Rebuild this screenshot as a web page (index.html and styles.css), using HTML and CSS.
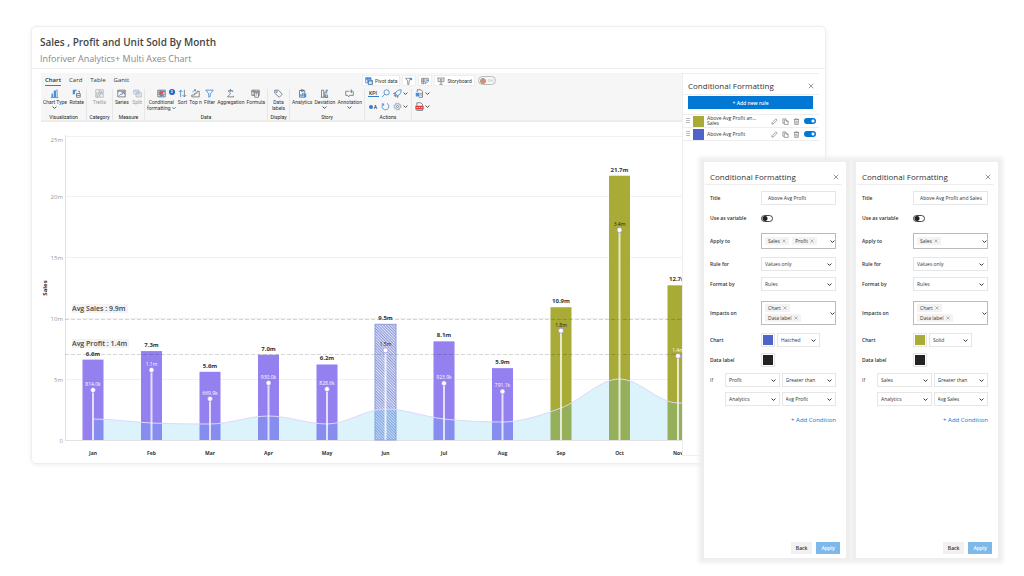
FILE: index.html
```html
<!DOCTYPE html>
<html lang="en">
<head>
    <meta charset="utf-8">
    <title>Sales, Profit and Unit Sold By Month</title>
    <link rel="stylesheet" href="styles.css">
</head>
<body>
<main class="report">
    <header class="report-header">
        <h1>Sales , Profit and Unit Sold By Month</h1>
        <p>Inforiver Analytics+ Multi Axes Chart</p>
    </header>
    <div class="report-body">
        <div class="canvas">
            <div class="ribbon">
                <div class="ribbon-top">
                    <nav class="tabs">
                        <a href="#" class="active">Chart</a>
                        <a href="#">Card</a>
                        <a href="#">Table</a>
                        <a href="#">Gantt</a>
                    </nav>
                    <div class="quick">
                        <button type="button"><svg viewBox="0 0 12 12"><path class="b" d="M1 1h8v3M1 1v8h3M1 3.500h8M3.500 1v8"/><rect class="fb" x="1" y="1" width="8" height="2"/><path d="M5 5h6v6H5z" fill="#fff"/><path class="b" d="M5 5h6v6H5zM5 7h6"/></svg>Pivot data</button>
                        <button type="button" aria-label="Filter"><svg viewBox="0 0 12 12"><path d="M1 2h8L6 6v5H4V6z"/><circle class="fb" cx="9" cy="3" r="2"/></svg></button>
                        <button type="button" aria-label="Edit table"><svg viewBox="0 0 12 12"><path d="M1 2h10v4M1 2v8h4M1 4.500h10M1 7h5M4 2v8"/><path class="b" d="M6 10l1-2.500 3-3 1.500 1.500-3 3z"/></svg></button>
                        <button type="button"><svg viewBox="0 0 12 12"><path d="M0.500 1.500h11M1.500 1.500v5.500h9V1.500M6 7v4M3.500 11h5M4 3.500h4M4 5h4"/></svg>Storyboard</button>
                        <label class="pill"><input type="checkbox"><span>Off</span></label>
                    </div>
                </div>
                <div class="groups">
                    <section class="group g-visual">
                        <div class="tools">
                            <button type="button"><svg viewBox="0 0 12 12"><path class="fb" d="M2 6h2v5H2zM5 2h3v9H5z"/><path class="b" d="M8 1.500h1.500V11M1 11.300h10"/></svg>Chart Type<i class="chev"></i></button>
                            <button type="button"><svg viewBox="0 0 12 12"><path class="fb" d="M1 1h3v6H1zM4 1h2v2H4z"/><path d="M6 6h5v5H6zM6 8.500h5M8 3h2v2"/></svg>Rotate</button>
                        </div>
                        <h2>Visualization</h2>
                    </section>
                    <section class="group g-category">
                        <div class="tools center">
                            <button type="button" disabled><svg viewBox="0 0 12 12"><path d="M1 1h4.500v4.500H1zM6.500 1H11v4.500H6.500zM1 6.500h4.500V11H1zM6.500 6.500H11V11H6.500z"/><path class="fb" d="M7 3h3v2.500H7zM2 8h2v3H2z"/></svg>Trellis</button>
                        </div>
                        <h2>Category</h2>
                    </section>
                    <section class="group g-measure">
                        <div class="tools">
                            <button type="button"><svg viewBox="0 0 12 12"><path d="M1 1.500h10v9H1zM1 3h10"/><path class="b" d="M3 9l2-2 1 1 3-4"/><path d="M6 5h4v2"/></svg>Series</button>
                            <button type="button" disabled><svg viewBox="0 0 12 12"><path class="b" d="M1 1.500h7v5H1zM1 3h7"/><path d="M4 5h7v5.500H4zM6 8h3"/></svg>Split</button>
                        </div>
                        <h2>Measure</h2>
                    </section>
                    <section class="group g-data">
                        <div class="tools">
                            <button type="button"><svg viewBox="0 0 12 12"><path d="M1 1.500h10v9H1zM1 4h10M1 7h10M4 1.500v9"/><path class="fb" d="M4 2h6v2H4zM4 7.500h5v2.500H4z"/><path fill="#e05252" stroke="none" d="M3 4h5v3H3z"/></svg><b class="badge">2</b>Conditional<br>formatting <i class="chev inline"></i></button>
                            <button type="button"><svg viewBox="0 0 12 12"><path class="b" d="M3.500 11V1.500M1 4l2.500-2.500L6 4"/><path d="M8.500 1v9.500M6 8l2.500 2.500L11 8"/></svg>Sort</button>
                            <button type="button"><svg viewBox="0 0 12 12"><path d="M1 10.500h10V3H8v2.500H5V8H1z"/><path class="b" d="M2 4l4-3M4 1h2v2"/></svg>Top n</button>
                            <button type="button"><svg viewBox="0 0 12 12"><path class="b" d="M1 1.500h10L7 6.500V10l-2 1V6.500z"/></svg>Filter</button>
                            <button type="button"><svg viewBox="0 0 12 12"><path d="M9 4V2.500H3L6 6l-4 4.500h8V9"/><path class="b" d="M6 .5v3M4.500 2L6 .5 7.500 2"/></svg>Aggregation</button>
                            <button type="button"><svg viewBox="0 0 12 12"><path d="M1 1.500h10v7H1zM1 3.500h10M4 1.500v7"/><path d="M5 4.500h5v6.500H5z" fill="#fff"/><path class="b" d="M6.500 6h2M6.500 8h2"/></svg>Formula</button>
                        </div>
                        <h2>Data</h2>
                    </section>
                    <section class="group g-display">
                        <div class="tools center">
                            <button type="button"><svg viewBox="0 0 12 12"><path d="M1 1.500h5l5 5.500-4 4-6-5.500z"/><circle class="b" cx="3.500" cy="3.800" r="1"/></svg>Data<br>labels</button>
                        </div>
                        <h2>Display</h2>
                    </section>
                    <section class="group g-story">
                        <div class="tools">
                            <button type="button"><svg viewBox="0 0 12 12"><path d="M2 2h7v9H2zM4 1h3v2H4z"/><path class="fb" d="M3 7h2v3H3zM5.500 5h2v5h-2zM8 6h3v5H8z"/></svg>Analytics</button>
                            <button type="button"><svg viewBox="0 0 12 12"><path d="M1 11h10M2 11V1.500h3V11M6.500 11V4h2.500"/><path class="b" d="M9 1v5M7.500 2.500L9 1l1.500 1.500M7 8h3v3H7z"/></svg>Deviation<i class="chev"></i></button>
                            <button type="button"><svg viewBox="0 0 12 12"><path d="M5 3H1v5.500h2.500L5 10.500l1-2h5V3.500"/><path class="b" d="M8.500.5v5M6 3h5"/></svg>Annotation<i class="chev"></i></button>
                        </div>
                        <h2>Story</h2>
                    </section>
                    <section class="group g-actions">
                        <div class="actions">
                            <button type="button" class="kpi">KPI</button>
                            <button type="button" aria-label="Search"><svg viewBox="0 0 12 12"><circle class="b" cx="7.500" cy="4.500" r="3.500"/><path class="b" d="M5 7l-4 4"/></svg></button>
                            <button type="button" aria-label="Quick actions"><svg viewBox="0 0 12 12"><path class="b" d="M3 6c1-3 4-5 8-5 0 4-2 7-5 8z"/><path class="fb" d="M1 8l3-1 1 2-2 2z"/><path d="M7 9l-1 2.500L5 9M3 7L.5 6 4 4.500"/></svg><i class="chev"></i></button>
                            <button type="button" aria-label="Text size" class="dot-a"><b></b>A</button>
                            <button type="button" aria-label="Refresh"><svg viewBox="0 0 12 12"><path class="b" d="M3 2.500a4.500 4.500 0 1 0 5-.6M1 2.500h2.500V5"/></svg></button>
                            <button type="button" aria-label="Settings"><svg viewBox="0 0 12 12"><circle class="g" cx="6" cy="6" r="4.700" stroke-dasharray="2 1.700"/><circle class="g" cx="6" cy="6" r="3.800"/><circle class="b" cx="6" cy="6" r="1.500"/></svg><i class="chev"></i></button>
                        </div>
                        <h2>Actions</h2>
                    </section>
                    <section class="group g-export">
                        <button type="button" aria-label="Export"><svg viewBox="0 0 12 12"><path d="M3 4V1h5l2 2v8H5"/><path class="fb" d="M1 5h5v5H1z"/><path d="M7 6h2M7 8h2"/></svg><i class="chev"></i></button>
                        <button type="button" aria-label="Export to PDF"><svg viewBox="0 0 12 12"><path d="M2.500 5V1h5L10 3v2M2.500 10v1.500H10V10"/><path fill="#d9373c" stroke="none" d="M.5 5h11v5H.5z"/><path stroke="#fff" d="M2 7.500h2M5 7.500h2M8 7.500h2"/></svg><i class="chev"></i></button>
                    </section>
                </div>
            </div>
            <svg class="chart" id="chart" viewBox="0 0 641 334" role="img" aria-label="Sales and profit by month">
                <defs>
                    <pattern id="hatch" width="2" height="2" patternUnits="userSpaceOnUse" patternTransform="rotate(-45)">
                        <rect width="2" height="2" fill="#e0e4f6" stroke="none"/>
                        <rect width="1" height="2" fill="#8c99da" stroke="none"/>
                    </pattern>
                </defs>
            </svg>
        </div>
        <aside class="rules">
            <div class="panel-title">
                <h2>Conditional Formatting</h2>
                <button type="button" class="close" aria-label="Close"></button>
            </div>
            <button type="button" class="add-rule">+ Add new rule</button>
            <ul>
                <li>
                    <span class="grip"></span><span class="swatch olive"></span>
                    <span class="rule-name">Above Avg Profit an...<br>Sales</span>
                    <button type="button" aria-label="Edit"><svg viewBox="0 0 12 12"><path d="M1.500 10.500l.8-3 6-6 2.200 2.200-6 6z"/></svg></button>
                    <button type="button" aria-label="Copy"><svg viewBox="0 0 12 12"><path d="M3.500 9H1.500V1.500h5V3M4 3.500h4l2.500 2.500v5H4zM8 3.500V6h2.500"/></svg></button>
                    <button type="button" aria-label="Delete"><svg viewBox="0 0 12 12"><path d="M1.500 2.500h9M4 2.500v-1h4v1M2.500 2.500l.5 8.500h6l.5-8.500M5 4.500v5M7 4.500v5"/></svg></button>
                    <input type="checkbox" class="toggle" aria-label="Enable rule Above Avg Profit and Sales" checked>
                </li>
                <li>
                    <span class="grip"></span><span class="swatch blue"></span>
                    <span class="rule-name">Above Avg Profit</span>
                    <button type="button" aria-label="Edit"><svg viewBox="0 0 12 12"><path d="M1.500 10.500l.8-3 6-6 2.200 2.200-6 6z"/></svg></button>
                    <button type="button" aria-label="Copy"><svg viewBox="0 0 12 12"><path d="M3.500 9H1.500V1.500h5V3M4 3.500h4l2.500 2.500v5H4zM8 3.500V6h2.500"/></svg></button>
                    <button type="button" aria-label="Delete"><svg viewBox="0 0 12 12"><path d="M1.500 2.500h9M4 2.500v-1h4v1M2.500 2.500l.5 8.500h6l.5-8.500M5 4.500v5M7 4.500v5"/></svg></button>
                    <input type="checkbox" class="toggle" aria-label="Enable rule Above Avg Profit" checked>
                </li>
            </ul>
        </aside>
    </div>
</main>

<div class="dialogs">
    <form class="dialog">
        <div class="panel-title">
            <h2>Conditional Formatting</h2>
            <button type="button" class="close" aria-label="Close"></button>
        </div>
        <div class="fields">
            <div class="row"><label for="title1">Title</label><input type="text" id="title1" value="Above Avg Profit"></div>
            <div class="row"><label for="var1">Use as variable</label><input type="checkbox" class="toggle small" id="var1"></div>
            <div class="row apply"><span class="label" id="apply1">Apply to</span>
                <div class="multi" role="group" aria-labelledby="apply1"><button type="button">Sales <i></i></button><button type="button">Profit <i></i></button></div></div>
            <div class="row"><label for="rule1">Rule for</label><select id="rule1"><option>Values only</option></select></div>
            <div class="row"><label for="format1">Format by</label><select id="format1"><option>Rules</option></select></div>
            <div class="row impacts"><span class="label" id="impact1">Impacts on</span>
                <div class="multi" role="group" aria-labelledby="impact1"><button type="button">Chart <i></i></button><button type="button">Data label <i></i></button></div></div>
            <div class="row"><label for="fill1">Chart</label><button type="button" class="color blue" aria-label="Chart color"></button><select id="fill1" class="fill"><option>Hatched</option></select></div>
            <div class="row"><label for="dl1">Data label</label><button type="button" class="color black" id="dl1"></button></div>
            <div class="conditions">
                <label for="if1">If</label>
                <select id="if1"><option>Profit</option></select>
                <select aria-label="Operator"><option>Greater than</option></select>
                <select class="second" aria-label="Compare with"><option>Analytics</option></select>
                <select aria-label="Value"><option>Avg Profit</option></select>
            </div>
            <a href="#" class="add-condition">+ Add Condition</a>
        </div>
        <footer><button type="button">Back</button><button type="submit" class="primary">Apply</button></footer>
    </form>

    <form class="dialog">
        <div class="panel-title">
            <h2>Conditional Formatting</h2>
            <button type="button" class="close" aria-label="Close"></button>
        </div>
        <div class="fields">
            <div class="row"><label for="title2">Title</label><input type="text" id="title2" value="Above Avg Profit and Sales"></div>
            <div class="row"><label for="var2">Use as variable</label><input type="checkbox" class="toggle small" id="var2"></div>
            <div class="row apply"><span class="label" id="apply2">Apply to</span>
                <div class="multi" role="group" aria-labelledby="apply2"><button type="button">Sales <i></i></button></div></div>
            <div class="row"><label for="rule2">Rule for</label><select id="rule2"><option>Values only</option></select></div>
            <div class="row"><label for="format2">Format by</label><select id="format2"><option>Rules</option></select></div>
            <div class="row impacts"><span class="label" id="impact2">Impacts on</span>
                <div class="multi" role="group" aria-labelledby="impact2"><button type="button">Chart <i></i></button><button type="button">Data label <i></i></button></div></div>
            <div class="row"><label for="fill2">Chart</label><button type="button" class="color olive" aria-label="Chart color"></button><select id="fill2" class="fill"><option>Solid</option></select></div>
            <div class="row"><label for="dl2">Data label</label><button type="button" class="color black" id="dl2"></button></div>
            <div class="conditions">
                <label for="if2">If</label>
                <select id="if2"><option>Sales</option></select>
                <select aria-label="Operator"><option>Greater than</option></select>
                <select class="second" aria-label="Compare with"><option>Analytics</option></select>
                <select aria-label="Value"><option>Avg Sales</option></select>
            </div>
            <a href="#" class="add-condition">+ Add Condition</a>
        </div>
        <footer><button type="button">Back</button><button type="submit" class="primary">Apply</button></footer>
    </form>
</div>
<script src="chart.js"></script>
</body>
</html>
```
FILE: styles.css
```css
* {
    box-sizing: border-box;
}
body {
    position: relative;
    min-height: 100vh;
    margin: 0;
    padding: 26px 26px 0 31px;
    background: #fff;
    color: #333;
    font-family: "Open Sans", "Noto Sans", sans-serif;
    font-size: 5px;
    line-height: 6px;
}
h1, h2, p, ul {
    margin: 0;
    padding: 0;
    font-weight: 400;
}
button, input, select {
    margin: 0;
    padding: 0;
    border: none;
    border-radius: 0;
    background: none;
    color: inherit;
    font: inherit;
}
a {
    color: inherit;
    text-decoration: none;
}
svg {
    fill: none;
    stroke: #666;
    stroke-width: 1;
}
svg .b {
    stroke: #2f7ed0;
}
svg .g {
    stroke: #999;
}
svg .fb {
    fill: #4a90d9;
    stroke: none;
}

/* report card */
.report {
    margin-right: 172px;
    border: 1px solid #eee;
    border-radius: 5px;
    box-shadow: 0 1px 4px #eee;
}
.report-header {
    padding: 8px 8px 3px;
    border-bottom: 1px solid #eee;
}
.report-header h1 {
    color: #444;
    font-size: 10px;
    line-height: 14px;
    font-weight: 600;
}
.report-header p {
    margin-top: 4px;
    color: #888;
    font-size: 9px;
    line-height: 12px;
}
.report-body {
    display: grid;
    grid-template-columns: minmax(0, 1fr) 137px;
    padding: 4px 6px 7px 9px;
}

/* ribbon */
.ribbon {
    height: 49px;
    background: #f6f6f6;
    border-bottom: 2px solid #ececec;
    font-family: Roboto, "Open Sans", sans-serif;
    white-space: nowrap;
}
.ribbon-top {
    display: flex;
    height: 14px;
}
.tabs {
    display: flex;
    gap: 8px;
    flex: 0 0 321px;
    padding: 2px 4px 0;
    font-family: "Open Sans", sans-serif;
}
.tabs a {
    height: 11px;
    font-size: 6px;
    line-height: 10px;
}
.tabs .active {
    border-bottom: 1px solid #2484d8;
    font-weight: 600;
}
.quick {
    display: flex;
    gap: 2px;
    padding-top: 2px;
}
.quick button {
    display: flex;
    align-items: center;
    gap: 2px;
    height: 11px;
    padding: 0 2px;
    background: #fff;
    border: 1px solid #eee;
}
.quick svg {
    width: 8px;
    height: 8px;
}
.pill {
    display: flex;
    align-items: center;
    gap: 2px;
    width: 18px;
    height: 9px;
    margin: 1px;
    border: 1px solid #bbb;
    border-radius: 5px;
    color: #bbb;
    font-size: 4px;
}
.pill input {
    appearance: none;
    width: 6px;
    height: 6px;
    margin-left: 1px;
    border: 1px solid #999;
    border-radius: 50%;
    background: #e58a66;
}
.groups {
    display: flex;
    padding-top: 2px;
}
.group {
    display: flex;
    flex-direction: column;
    justify-content: space-between;
    height: 31px;
    padding: 0 2px;
    border-right: 1px solid #e6e6e6;
}
.group h2 {
    font-size: 5px;
    line-height: 6px;
    text-align: center;
    color: #222;
}
.tools {
    display: flex;
    justify-content: space-between;
}
.tools.center {
    justify-content: center;
}
.tools button {
    position: relative;
    display: block;
    align-self: flex-start;
    line-height: 6px;
    text-align: center;
}
.tools svg {
    display: block;
    width: 9px;
    height: 9px;
    margin: 0 auto 1px;
}
.tools button:disabled {
    opacity: .5;
}
.g-visual { width: 46px; }
.g-category { width: 26px; }
.g-measure { width: 32px; }
.g-data { width: 123px; }
.g-display { width: 22px; }
.g-story { width: 75px; }
.g-actions { width: 47px; }
.g-export {
    justify-content: flex-start;
    gap: 4px;
    padding-left: 3px;
    height: 24px;
    border: none;
}
.tools .badge {
    position: absolute;
    top: 0;
    right: 1px;
    width: 6px;
    height: 6px;
    border-radius: 50%;
    background: #1b63c6;
    color: #fff;
    font-size: 4px;
}
.chev {
    display: block;
    width: 5px;
    height: 5px;
    background: url('data:image/svg+xml,<svg xmlns="http://www.w3.org/2000/svg" viewBox="0 0 8 8"><path d="M1 2.500l3 3 3-3" fill="none" stroke="%23444" stroke-width="1.500"/></svg>') center / contain no-repeat;
}
.tools .chev {
    margin: 0 auto;
}
.tools .chev.inline {
    display: inline-block;
    width: 4px;
    height: 4px;
}
.actions {
    display: grid;
    grid-template-columns: 11px 12px 16px;
    justify-content: center;
    gap: 4px 1px;
}
.actions button, .g-export button {
    display: flex;
    align-items: center;
    justify-content: center;
    gap: 1px;
    height: 9px;
}
.g-export button {
    justify-content: flex-start;
}
.actions svg, .g-export svg {
    width: 9px;
    height: 9px;
}
.actions .kpi {
    height: 8px;
    border-bottom: 1px solid #2f7ed0;
    font-weight: 500;
}
.actions .dot-a {
    font-weight: 500;
}
.dot-a b {
    width: 4px;
    height: 4px;
    border-radius: 50%;
    background: #2f7ed0;
}

/* chart */
.chart {
    display: block;
    width: 100%;
    overflow: hidden;
}
.chart text {
    stroke: none;
    fill: #333;
    font-size: 6px;
    text-anchor: middle;
}
.chart .tick {
    fill: #999;
    text-anchor: end;
}
.chart .month {
    font-size: 5px;
    font-weight: 700;
}
.chart .value, .chart .axis-name {
    font-weight: 700;
}
.chart .avg {
    fill: #444;
    font-size: 7px;
    font-weight: 600;
    text-anchor: start;
}
.chart .avg-bg {
    fill: #f3f3f3;
    stroke: none;
}
.chart .profit {
    font-size: 5px;
    fill: #fff;
}
.chart .profit.dark {
    fill: #222;
}
.chart .grid {
    stroke: #f1f1f1;
}
.chart .axis {
    stroke: #e2e2e2;
}
.chart .avg-line {
    stroke: #000;
    stroke-opacity: .16;
    stroke-dasharray: 4 2;
}
.chart .bar {
    stroke: none;
    fill: #9480ee;
}
.chart .bar.olive {
    fill: #a8ab35;
}
.chart .bar.hatched {
    fill: url(#hatch);
    stroke: #8f9bdb;
}
.chart .area {
    fill: rgba(80, 195, 240, .2);
    stroke: none;
}
.chart .area-line {
    stroke: #dcd8fa;
}
.chart .stem {
    stroke: #fff;
    stroke-width: 2;
    stroke-opacity: .75;
}
.chart .dot {
    fill: #fff;
    stroke: #9480ee;
    stroke-opacity: .6;
}

/* rule list */
.rules {
    border: 1px solid #eee;
    border-width: 1px 0 1px 1px;
    background: #fff;
}
.panel-title {
    display: flex;
    align-items: center;
    justify-content: space-between;
    height: 21px;
    padding: 4px 5px 0;
    border-bottom: 1px solid #eee;
}
.panel-title h2 {
    font-size: 8px;
    line-height: 12px;
}
.close {
    width: 6px;
    height: 6px;
}
.close, .multi i {
    background: url('data:image/svg+xml,<svg xmlns="http://www.w3.org/2000/svg" viewBox="0 0 8 8"><path d="M1 1l6 6M7 1L1 7" stroke="%23777" stroke-width="1"/></svg>') center / contain no-repeat;
}
.add-rule {
    display: block;
    width: calc(100% - 11px);
    height: 13px;
    margin: 1px 6px 5px 5px;
    background: #0078d4;
    color: #fff;
    font-weight: 600;
}
.rules ul {
    list-style: none;
    border-top: 1px solid #eee;
}
.rules li {
    display: flex;
    align-items: center;
    gap: 3px;
    height: 13px;
    padding: 0 3px;
    border-bottom: 1px solid #eee;
}
.rules li svg {
    display: block;
    width: 7px;
    height: 7px;
}
.rules li button {
    margin-right: 1px;
}
.grip {
    width: 4px;
    height: 6px;
    background: repeating-linear-gradient(#bbb 0 1px, #fff 1px 2px);
}
.swatch {
    width: 11px;
    height: 11px;
}
.rule-name {
    flex: 1;
    line-height: 5px;
    white-space: nowrap;
}
.olive { background: #a8ab35; }
.blue { background: #4f63c8; }
.black { background: #222; }
.toggle {
    appearance: none;
    width: 12px;
    height: 6px;
    border-radius: 3px;
    background: radial-gradient(circle at 9px 3px, #fff 1px, #0078d4 2px);
}
.toggle.small {
    height: 7px;
    border: 1px solid #444;
    border-radius: 4px;
    background: radial-gradient(circle at 3px 50%, #222 2px, #fff 3px);
}

/* rule dialogs, floating over the report */
.dialogs {
    position: absolute;
    top: 162px;
    right: 26px;
    display: flex;
    gap: 10px;
}
.dialog {
    display: flex;
    flex-direction: column;
    width: 142px;
    min-height: 396px;
    padding: 1px 4px 4px 1px;
    background: #fff;
    box-shadow: 0 0 4px 5px #eee;
}
.dialog .panel-title {
    height: 22px;
    padding: 6px 4px 0 5px;
}
.dialog .close {
    margin-right: -1px;
}
.fields {
    display: flex;
    flex-direction: column;
    gap: 6px;
    padding: 6px 6px 0 5px;
}
.row {
    display: flex;
    align-items: center;
}
.row label, .row .label {
    flex: 1;
    font-weight: 600;
}
.row > select, .row > input[type=text], .row > .multi {
    width: 75px;
    height: 14px;
}
.row > .toggle {
    margin: 4px 63px 3px 0;
}
select, input[type=text], .multi {
    border: 1px solid #e6e6e6;
}
input[type=text] {
    padding: 0 2px 0 6px;
}
select {
    appearance: none;
    padding: 0 3px;
}
select, .multi {
    background: url('data:image/svg+xml,<svg xmlns="http://www.w3.org/2000/svg" viewBox="0 0 8 8"><path d="M1 2.500l3 3 3-3" fill="none" stroke="%23222" stroke-width="1.500"/></svg>') right 3px center / 5px 5px no-repeat;
}
.row.apply {
    padding: 2px 0;
}
.row.impacts {
    padding: 4px 0 2px;
}
.row > .multi {
    display: flex;
    flex-wrap: wrap;
    align-content: center;
    gap: 2px 3px;
    height: auto;
    min-height: 16px;
    padding: 2px 8px 2px 3px;
    border-color: #bbb;
    background-position: right 0 center;
}
.impacts > .multi {
    min-height: 24px;
    padding-right: 20px;
}
.multi button {
    height: 8px;
    padding: 0 3px;
    background-color: #f3f3f3;
}
.multi i {
    display: inline-block;
    width: 4px;
    height: 4px;
    margin-left: 1px;
}
.color {
    width: 14px;
    height: 14px;
    border: 2px solid #fff;
    outline: 1px solid #e6e6e6;
    outline-offset: -1px;
}
.row > .color {
    margin-right: 61px;
}
.row > .color:not(:last-child) {
    margin-right: 2px;
}
.row > .fill {
    width: 43px;
    margin-right: 16px;
}
.conditions {
    display: grid;
    grid-template-columns: 13px 1fr 1fr;
    gap: 5px 2px;
    align-items: center;
}
.conditions select {
    min-width: 0;
    height: 14px;
}
.conditions .second {
    grid-column: 2;
}
.add-condition {
    margin-top: 2px;
    align-self: flex-end;
    color: #0078d4;
    font-size: 6px;
    line-height: 12px;
}
.dialog footer {
    display: flex;
    justify-content: flex-end;
    gap: 4px;
    margin-top: auto;
    padding-right: 2px;
}
.dialog footer button {
    height: 12px;
    padding: 0 5px;
    background: #f1f1f1;
    font-weight: 600;
}
.dialog footer .primary {
    background: #7db8ea;
    color: #fff;
}
```
FILE: chart.js
```js
const NS = 'http://www.w3.org/2000/svg';
const chart = document.getElementById('chart');

// sales and profit in millions, units as height of the area
const months = [
    { name: 'Jan', sales: 6.6, profit: 0.814, label: '814.0k', units: 21 },
    { name: 'Feb', sales: 7.3, profit: 1.14, label: '1.1m', units: 17 },
    { name: 'Mar', sales: 5.6, profit: 0.67, label: '669.9k', units: 16 },
    { name: 'Apr', sales: 7.0, profit: 0.93, label: '930.0k', units: 24 },
    { name: 'May', sales: 6.2, profit: 0.829, label: '828.6k', units: 16 },
    { name: 'Jun', sales: 9.5, profit: 1.46, label: '1.5m', units: 31, type: 'hatched' },
    { name: 'Jul', sales: 8.1, profit: 0.924, label: '923.9k', units: 21 },
    { name: 'Aug', sales: 5.9, profit: 0.791, label: '791.1k', units: 18 },
    { name: 'Sep', sales: 10.9, profit: 1.78, label: '1.8m', units: 32, type: 'olive' },
    { name: 'Oct', sales: 21.7, profit: 3.42, label: '3.4m', units: 61, type: 'olive' },
    { name: 'Nov', sales: 12.7, profit: 1.37, label: '1.4m', units: 37, type: 'olive' }
];

const base = 318;
const left = 24;
const salesScale = 12.18;
const profitScale = 61.4;
const monthX = i => 52 + i * 58.5;

function draw(tag, className, attrs, text) {
    const el = document.createElementNS(NS, tag);
    el.setAttribute('class', className);
    for (const key in attrs) {
        el.setAttribute(key, attrs[key]);
    }
    if (text) {
        el.textContent = text;
    }
    chart.appendChild(el);
}

for (let v = 0; v <= 25; v += 5) {
    const y = Math.round(base - v * salesScale) + 0.5;
    draw('line', v ? 'grid' : 'axis', { x1: left, x2: 641, y1: y, y2: y });
    draw('text', 'tick', { x: left - 2, y: v === 25 ? y + 5 : y + 2 }, v ? v + 'm' : '0');
}
draw('line', 'axis', { x1: left + 0.5, x2: left + 0.5, y1: 13, y2: base });
draw('text', 'axis-name', { x: 0, y: 0, transform: 'translate(6 166) rotate(-90)' }, 'Sales');

months.forEach((m, i) => {
    const height = m.sales * salesScale;
    draw('rect', 'bar ' + (m.type || ''), { x: monthX(i) - 10.5, y: base - height, width: 21, height: height });
});

// smooth area: flat tangents at peaks, average slope elsewhere
const pts = months.map((m, i) => [monthX(i), base - m.units]);
const slopes = pts.map((p, i) => {
    if (i === 0 || i === pts.length - 1) return 0;
    const a = p[1] - pts[i - 1][1];
    const b = pts[i + 1][1] - p[1];
    return a * b <= 0 ? 0 : (a + b) / 2;
});
let line = 'M' + pts[0];
for (let i = 1; i < pts.length; i++) {
    const [x0, y0] = pts[i - 1];
    const [x1, y1] = pts[i];
    const dx = (x1 - x0) / 3;
    line += `C${x0 + dx} ${y0 + slopes[i - 1] / 3} ${x1 - dx} ${y1 - slopes[i] / 3} ${x1} ${y1}`;
}
line += 'H641';
draw('path', 'area', { d: line + `V${base}H${pts[0][0]}Z` });
draw('path', 'area-line', { d: line });

[[197.5, 190, 'Avg Sales : 9.9m', 56], [232.5, 225, 'Avg Profit : 1.4m', 57]].forEach(([y, ty, text, w]) => {
    draw('line', 'avg-line', { x1: left, x2: 641, y1: y, y2: y });
    draw('rect', 'avg-bg', { x: 31, y: ty - 8, width: w, height: 9 });
    draw('text', 'avg', { x: 31, y: ty - 1 }, text);
});

months.forEach((m, i) => {
    const x = monthX(i);
    const y = base - m.profit * profitScale;
    draw('line', 'stem', { x1: x, x2: x, y1: y, y2: base });
    draw('circle', 'dot', { cx: x, cy: y, r: 2.5 });
    draw('text', 'profit ' + (m.profit > 1.4 ? 'dark' : ''), { x: x, y: y - 4 }, m.label);
    draw('text', 'value', { x: x, y: base - m.sales * salesScale - 4 }, m.sales.toFixed(1) + 'm');
    draw('text', 'month', { x: x, y: base + 15 }, m.name);
});
```
